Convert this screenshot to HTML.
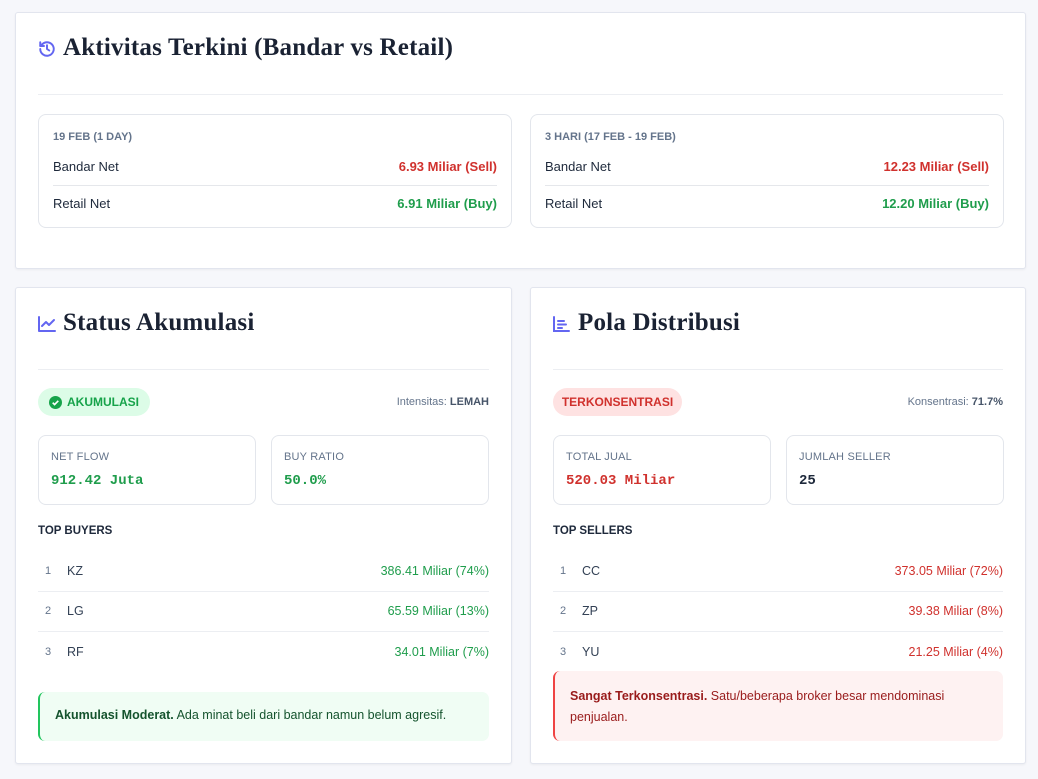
<!DOCTYPE html>
<html><head><meta charset="utf-8"><style>
*{box-sizing:border-box;margin:0;padding:0}
body{width:1038px;height:779px;background:#f6f7fb;font-family:"Liberation Sans",sans-serif;color:#1e293b;position:relative;overflow:hidden}
.card{position:absolute;background:#fff;border:1px solid #e2e5ee;border-radius:3px;box-shadow:0 1px 2px rgba(0,0,0,.05)}
.abs{position:absolute}
.title{font-family:"Liberation Serif",serif;font-weight:bold;font-size:25px;color:#1a2233;white-space:nowrap;letter-spacing:0.2px}
.hr{position:absolute;height:1px;background:#eceef2}
.box{position:absolute;border:1px solid #e3e6ec;border-radius:8px;background:#fff}
.lbl{font-size:11px;font-weight:bold;color:#64748b}
.row{position:absolute;left:14px;right:14px;font-size:13px;display:flex;justify-content:space-between}
.red{color:#d0312d}.green{color:#1f9d4c}
.small{font-size:11px;color:#64748b;letter-spacing:.2px}
.mono{font-family:"Liberation Mono",monospace;font-weight:bold;font-size:14px}
.li{position:absolute;left:22px;right:22px;height:40px;display:flex;align-items:center;font-size:12.5px}
.li .n{width:29px;padding-left:7px;font-size:11px;color:#64748b}
.li .c{flex:1;color:#334155}
</style></head><body>

<div class="card" style="left:15px;top:12px;width:1011px;height:257px">
  <svg class="abs" style="left:22px;top:27px" width="18" height="18" viewBox="0 0 24 24" fill="none" stroke="#6366f1" stroke-width="2.6" stroke-linecap="round" stroke-linejoin="round"><path d="M3 12a9 9 0 1 0 3-6.7L3 8"/><path d="M3 3v5h5"/><path d="M12 7v5l3 2"/></svg>
  <div class="title abs" style="left:47px;top:21px">Aktivitas Terkini (Bandar vs Retail)</div>
  <div class="hr" style="left:22px;right:22px;top:81px"></div>
  <div class="box" style="left:22px;top:101px;width:474px;height:114px">
    <div class="lbl abs" style="left:14px;top:16px">19 FEB (1 DAY)</div>
    <div class="row" style="top:44px"><span>Bandar Net</span><b class="red">6.93 Miliar (Sell)</b></div>
    <div class="hr" style="left:14px;right:14px;top:70px;background:#e5e7eb"></div>
    <div class="row" style="top:81px"><span>Retail Net</span><b class="green">6.91 Miliar (Buy)</b></div>
  </div>
  <div class="box" style="left:514px;top:101px;width:474px;height:114px">
    <div class="lbl abs" style="left:14px;top:16px">3 HARI (17 FEB - 19 FEB)</div>
    <div class="row" style="top:44px"><span>Bandar Net</span><b class="red">12.23 Miliar (Sell)</b></div>
    <div class="hr" style="left:14px;right:14px;top:70px;background:#e5e7eb"></div>
    <div class="row" style="top:81px"><span>Retail Net</span><b class="green">12.20 Miliar (Buy)</b></div>
  </div>
</div>

<div class="card" style="left:15px;top:287px;width:497px;height:477px">
  <svg class="abs" style="left:22px;top:28px" width="18" height="16" viewBox="0 0 18 16" fill="none" stroke="#6366f1" stroke-width="2" stroke-linecap="round" stroke-linejoin="round"><path d="M1 1v14h16"/><path d="M4 10l4-4 3 3 5-5"/></svg>
  <div class="title abs" style="left:47px;top:21px">Status Akumulasi</div>
  <div class="hr" style="left:22px;right:22px;top:81px"></div>
  <div class="abs" style="left:22px;top:100px;width:112px;height:28px;border-radius:14px;background:#dcfce7;color:#16a34a;font-size:12px;font-weight:bold;display:flex;align-items:center;padding-left:11px">
    <svg width="13" height="13" viewBox="0 0 14 14" style="margin-right:5px"><circle cx="7" cy="7" r="7" fill="#16a34a"/><path d="M4 7.2l2 2 4-4" stroke="#fff" stroke-width="1.8" fill="none"/></svg>AKUMULASI</div>
  <div class="abs" style="right:22px;top:108px;font-size:11px;color:#64748b">Intensitas: <b style="color:#475569">LEMAH</b></div>
  <div class="box" style="left:22px;top:147px;width:218px;height:70px">
    <div class="small abs" style="left:12px;top:15px">NET FLOW</div>
    <div class="mono green abs" style="left:12px;top:37px">912.42 Juta</div>
  </div>
  <div class="box" style="left:255px;top:147px;width:218px;height:70px">
    <div class="small abs" style="left:12px;top:15px">BUY RATIO</div>
    <div class="mono green abs" style="left:12px;top:37px">50.0%</div>
  </div>
  <div class="abs" style="left:22px;top:237px;font-size:11.5px;font-weight:bold;color:#1e293b">TOP BUYERS</div>
  <div class="li" style="top:263px"><span class="n">1</span><span class="c">KZ</span><span class="green">386.41 Miliar (74%)</span></div>
  <div class="hr" style="left:22px;right:22px;top:303px"></div>
  <div class="li" style="top:303px"><span class="n">2</span><span class="c">LG</span><span class="green">65.59 Miliar (13%)</span></div>
  <div class="hr" style="left:22px;right:22px;top:343px"></div>
  <div class="li" style="top:344px"><span class="n">3</span><span class="c">RF</span><span class="green">34.01 Miliar (7%)</span></div>
  <div class="abs" style="left:22px;right:22px;top:404px;height:49px;background:#f0fdf4;border-left:2px solid #22c55e;border-radius:7px;font-size:12.5px;color:#14532d;padding:16px 0 0 15px"><b>Akumulasi Moderat.</b> Ada minat beli dari bandar namun belum agresif.</div>
</div>

<div class="card" style="left:530px;top:287px;width:496px;height:477px">
  <svg class="abs" style="left:22px;top:28px" width="17" height="16" viewBox="0 0 17 16" fill="none" stroke="#6366f1" stroke-width="2" stroke-linecap="round"><path d="M1 1v14h15"/><path d="M5 5h6M5 8.5h8M5 12h4"/></svg>
  <div class="title abs" style="left:47px;top:21px">Pola Distribusi</div>
  <div class="hr" style="left:22px;right:22px;top:81px"></div>
  <div class="abs" style="left:22px;top:100px;width:129px;height:28px;border-radius:14px;background:#fee2e2;color:#d0312d;font-size:12px;font-weight:bold;display:flex;align-items:center;justify-content:center">TERKONSENTRASI</div>
  <div class="abs" style="right:22px;top:108px;font-size:11px;color:#64748b">Konsentrasi: <b style="color:#475569">71.7%</b></div>
  <div class="box" style="left:22px;top:147px;width:218px;height:70px">
    <div class="small abs" style="left:12px;top:15px">TOTAL JUAL</div>
    <div class="mono red abs" style="left:12px;top:37px">520.03 Miliar</div>
  </div>
  <div class="box" style="left:255px;top:147px;width:218px;height:70px">
    <div class="small abs" style="left:12px;top:15px">JUMLAH SELLER</div>
    <div class="mono abs" style="left:12px;top:37px;color:#1e293b">25</div>
  </div>
  <div class="abs" style="left:22px;top:237px;font-size:11.5px;font-weight:bold;color:#1e293b">TOP SELLERS</div>
  <div class="li" style="top:263px"><span class="n">1</span><span class="c">CC</span><span class="red">373.05 Miliar (72%)</span></div>
  <div class="hr" style="left:22px;right:22px;top:303px"></div>
  <div class="li" style="top:303px"><span class="n">2</span><span class="c">ZP</span><span class="red">39.38 Miliar (8%)</span></div>
  <div class="hr" style="left:22px;right:22px;top:343px"></div>
  <div class="li" style="top:344px"><span class="n">3</span><span class="c">YU</span><span class="red">21.25 Miliar (4%)</span></div>
  <div class="abs" style="left:22px;right:22px;top:383px;height:70px;background:#fef2f2;border-left:2px solid #ef4444;border-radius:7px;font-size:12.5px;color:#991b1b;padding:15px 40px 0 15px;line-height:21px"><b>Sangat Terkonsentrasi.</b> Satu/beberapa broker besar mendominasi penjualan.</div>
</div>
</body></html>
